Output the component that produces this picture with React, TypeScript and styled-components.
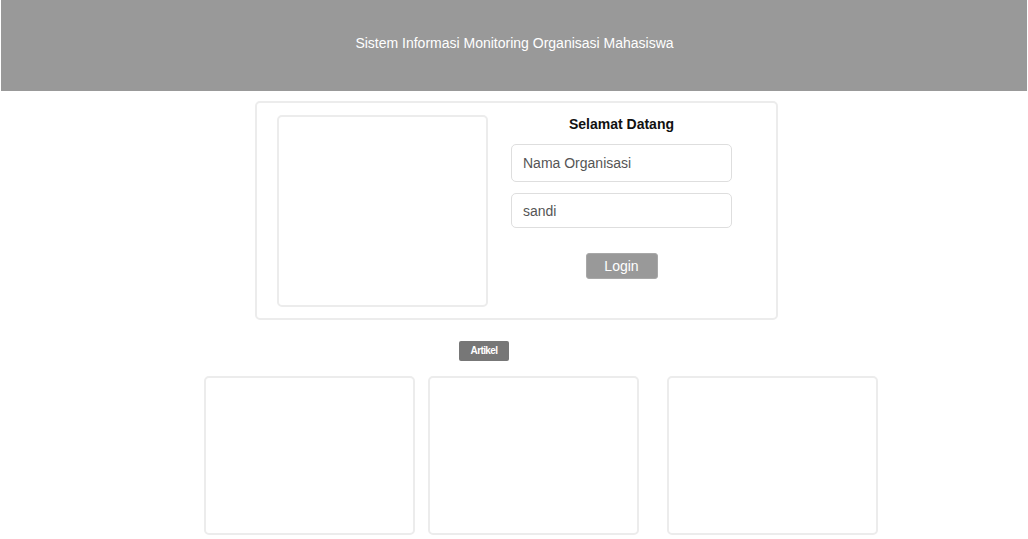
import React from "react";
import styled, { createGlobalStyle } from "styled-components";

const Global = createGlobalStyle`
  html, body { margin: 0; padding: 0; background: #fff; }
  body { font-family: "Liberation Sans", Arial, sans-serif; }
  * { box-sizing: border-box; }
`;

const Page = styled.div`
  width: 1028px;
  height: 539px;
  overflow: hidden;
  display: flex;
  flex-direction: column;
`;

const Header = styled.header`
  margin: 0 1px;
  height: 91px;
  background: #999999;
  display: flex;
  align-items: center;
  justify-content: center;
  padding: 0 0 5px 1px;
  color: #ffffff;
  font-size: 14px;
`;

const LoginCard = styled.section`
  margin: 10px 0 0 255px;
  width: 523px;
  height: 219px;
  border: 2px solid #ececec;
  border-radius: 5px;
  display: flex;
  padding: 12px 0 0 20px;
`;

const ImageBox = styled.div`
  width: 211px;
  height: 192px;
  border: 2px solid #ececec;
  border-radius: 5px;
`;

const Form = styled.div`
  margin-left: 23px;
  width: 221px;
  display: flex;
  flex-direction: column;
  align-items: center;
`;

const Title = styled.h2`
  margin: 1px 0 0;
  font-size: 14px;
  font-weight: bold;
  color: #111;
  line-height: 16px;
`;

const Input = styled.input<{ $h: number; $mt: number }>`
  width: 221px;
  height: ${(p) => p.$h}px;
  margin-top: ${(p) => p.$mt}px;
  border: 1.5px solid #dedede;
  border-radius: 5px;
  padding: 0 11px;
  font-family: "Liberation Sans", Arial, sans-serif;
  font-size: 14px;
  color: #555;
  background: #fff;
  outline: none;
  &::placeholder { color: #555; }
`;

const LoginButton = styled.button`
  margin-top: 25px;
  width: 72px;
  height: 26px;
  background: #999999;
  border: 1px solid #a8a8a8;
  border-radius: 3px;
  color: #fff;
  font-family: "Liberation Sans", Arial, sans-serif;
  font-size: 14px;
  padding: 0;
`;

const ArtikelRow = styled.div`
  margin: 20px 0 0 459px;
`;

const ArtikelButton = styled.button`
  width: 50px;
  height: 20px;
  background: #777777;
  border: none;
  border-radius: 2px;
  color: #fff;
  font-family: "Liberation Sans", Arial, sans-serif;
  font-size: 10px;
  font-weight: bold;
  letter-spacing: -0.6px;
  padding: 0;
`;

const CardRow = styled.div`
  margin: 15px 0 0 204px;
  display: flex;
`;

const ArticleCard = styled.div<{ $ml: number }>`
  margin-left: ${(p) => p.$ml}px;
  width: 211px;
  height: 159px;
  border: 2px solid #ececec;
  border-radius: 5px;
`;

export default function App() {
  return (
    <>
      <Global />
      <Page>
        <Header>Sistem Informasi Monitoring Organisasi Mahasiswa</Header>
        <LoginCard>
          <ImageBox />
          <Form>
            <Title>Selamat Datang</Title>
            <Input $h={38} $mt={12} placeholder="Nama Organisasi" />
            <Input $h={35} $mt={11} placeholder="sandi" />
            <LoginButton>Login</LoginButton>
          </Form>
        </LoginCard>
        <ArtikelRow>
          <ArtikelButton>Artikel</ArtikelButton>
        </ArtikelRow>
        <CardRow>
          <ArticleCard $ml={0} />
          <ArticleCard $ml={13} />
          <ArticleCard $ml={28} />
        </CardRow>
      </Page>
    </>
  );
}
